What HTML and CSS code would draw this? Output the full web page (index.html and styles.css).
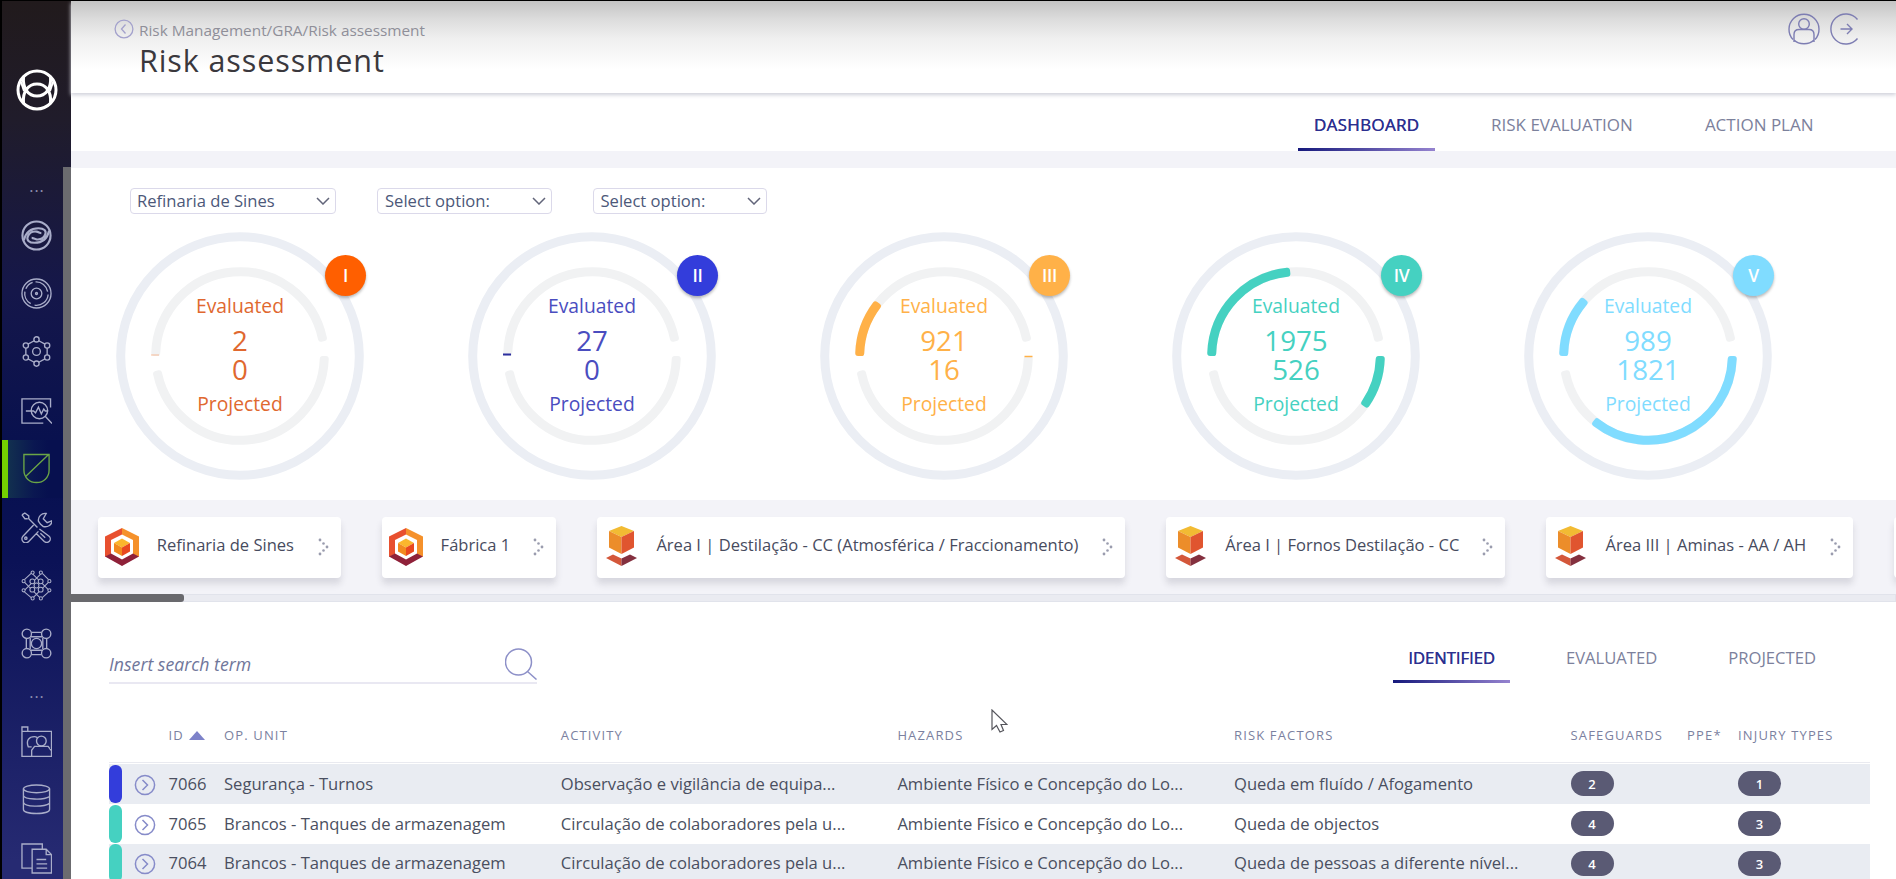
FILE: index.html
```html
<!DOCTYPE html>
<html lang="en">
<head>
<meta charset="utf-8">
<title>Risk assessment</title>
<link rel="stylesheet" href="styles.css">
</head>
<body>
<svg class="defs" width="0" height="0">
  <defs>
    <symbol id="plant" viewBox="0 0 34 38">
      <path d="M17 0L0 8.500V29l6-3V12l11-5.500z" fill="#e8502f"/>
      <path d="M17 0l17 8.500V29l-6-3V12L17 6.500z" fill="#f5912b"/>
      <path d="M0 28.500l6-3 11 6 11-6 6 3L17 38z" fill="#8f2139"/>
      <path d="M17 10.500l8 4.500-8 4.500L9 15z" fill="#fbb62d"/>
      <path d="M9 15l8 4.500V28l-8-4.500z" fill="#f28a1f"/>
      <path d="M25 15l-8 4.500V28l8-4.500z" fill="#e9481f"/>
    </symbol>
    <symbol id="area" viewBox="0 0 31 40">
      <path d="M15.500 0L28 5 15.500 11 3 5z" fill="#f2bb33"/>
      <path d="M3 5l12.500 6v17L3 21.500z" fill="#ec8d2a"/>
      <path d="M28 5l-12.500 6v17L28 21.500z" fill="#e0552f"/>
      <path d="M0 32l7-3.500 8.500 4V40z" fill="#d4573a"/>
      <path d="M31 32l-7-3.500-8.500 4V40z" fill="#84303f"/>
    </symbol>
    <symbol id="dots" viewBox="0 0 12 18">
      <g fill="#9a9cae"><circle cx="2" cy="2" r="1.400"/><circle cx="5.500" cy="5.500" r="1.300"/><circle cx="9" cy="9" r="1.400"/><circle cx="5.500" cy="12.500" r="1.300"/><circle cx="2" cy="16" r="1.400"/></g>
    </symbol>
    <symbol id="open" viewBox="0 0 22 22">
      <g fill="none" stroke="#868bc9" stroke-width="1.500"><circle cx="11" cy="11" r="9.600"/><path d="M8.500 6l5 5-5 5"/></g>
    </symbol>
  </defs>
</svg>
<div class="app">
  <aside class="sidebar">
    <svg class="logo" viewBox="0 0 42 42" fill="none" stroke="#fff" stroke-width="3">
      <circle cx="21" cy="21" r="19"/>
      <path d="M7.500 8c-1 12 5 19 13.500 19S35.500 20 34.500 8M7.500 34c-1-12 5-19 13.500-19s14.500 7 13.500 19"/>
      <path d="M5 13l3 9M37 13l-3 9" stroke-width="2"/>
    </svg>
    <nav class="menu">
      <span class="more">...</span>
      <a class="item bold"><svg viewBox="0 0 32 32"><circle cx="16" cy="16" r="14.500"/><path d="M3 21C5 12 11 8.500 18 8.500c6 0 8.500 3 7 6.500-1.500 3.500-5 5.500-9 5-2-.3-3.500-1.500-5-1.500M29 11C27 20 21 23.500 14 23.500c-6 0-8.500-3-7-6.500 1.500-3.500 5-5.500 9-5 2 .3 3.500 1.500 5 1.500"/></svg></a>
      <a class="item"><svg viewBox="0 0 32 32"><circle cx="16" cy="16" r="15"/><circle cx="16" cy="16" r="5.500"/><circle cx="16" cy="16" r="1"/><path d="M12 4.500A12 12 0 0 0 5 11M4 14a12 12 0 0 0 6 12.500M15 4a12 12 0 0 1 12.500 10M28 17a12 12 0 0 1-14 11"/></svg></a>
      <a class="item"><svg viewBox="0 0 32 32"><circle cx="16" cy="16" r="4"/><circle cx="16" cy="3.500" r="2.700"/><circle cx="16" cy="28.500" r="2.700"/><circle cx="5" cy="9.800" r="2.700"/><circle cx="27" cy="9.800" r="2.700"/><circle cx="5" cy="22.200" r="2.700"/><circle cx="27" cy="22.200" r="2.700"/><path d="M7.300 8.400l6.300-3.500M18.400 4.900l6.300 3.500M5 12.500v7M27 12.500v7M7.300 23.600l6.300 3.500M18.400 27.100l6.300-3.500"/></svg></a>
      <a class="item"><svg viewBox="0 0 32 32"><path d="M30.500 13V4H1v25h22"/><circle cx="19" cy="16" r="8.500"/><path d="M25 22l7 7.500M5 16.500h8l2 2 3-6 3 7 2.500-5 1.500 2h3"/></svg></a>
      <a class="item active"><svg viewBox="0 0 32 32"><path d="M3 1.500h26v16c0 8-6 13-13 13S3 25.500 3 17.500zM4.500 24.500L28.500 1.500"/></svg></a>
      <a class="item"><svg viewBox="0 0 32 32"><path d="M1 3l3-2 4 3v3l9 9M7 7L4 7 1 3M26 1.500a7 7 0 0 0-8 8l2 3 3 2.500c5 1 9-2 9-6l-5 2-4-4zM13 13.500L2 25a4 4 0 0 0 6 5.500L18 20M19 17.500l10 7.500a3.500 3.500 0 0 1-5 5.500l-8-8M20 22l5 4.500"/><circle cx="5" cy="27" r="1.200"/></svg></a>
      <a class="item mesh"><svg viewBox="0 0 32 32"><path d="M10.500 3.500L3.500 10M22 3.500l6.500 6.500M3.500 12.500l17 17M12 4l17 17M20.500 4L3.500 21M28.500 12.500l-17 17M3.500 22.500l7 6M28.500 22.500l-6.500 6"/><g fill="#0d1557"><circle cx="12" cy="2.700" r="1.600"/><circle cx="20.500" cy="2.700" r="1.600"/><circle cx="2.700" cy="11.500" r="1.600"/><circle cx="11.700" cy="11.700" r="2.500"/><circle cx="20.300" cy="11.700" r="2.500"/><circle cx="29.300" cy="11.500" r="1.600"/><circle cx="16" cy="16" r="2.500"/><circle cx="2.700" cy="21" r="1.600"/><circle cx="11.700" cy="20.300" r="2.500"/><circle cx="20.300" cy="20.300" r="2.500"/><circle cx="29.300" cy="21" r="1.600"/><circle cx="12" cy="29.300" r="1.600"/><circle cx="20.500" cy="29.300" r="1.600"/></g></svg></a>
      <a class="item"><svg viewBox="0 0 32 32"><circle cx="6" cy="6" r="4.800"/><circle cx="26" cy="6" r="4.800"/><circle cx="6" cy="26" r="4.800"/><circle cx="26" cy="26" r="4.800"/><circle cx="16" cy="16" r="5.300"/><path d="M11 4.500h10M10 9h12M10 23h12M11 27.500h10M5.500 11v10M9.500 10v12M22.500 10v12M26.500 11v10"/></svg></a>
      <span class="more low">...</span>
      <a class="item"><svg viewBox="0 0 32 32"><path d="M1 6V1h6v5M1 5.500h30.500v26H1zM11 31v-6l3-4h14l3 4M11 21.500H7.500C5 15 8 11 14 11c1.500 0 2 .5 3 1"/><circle cx="21" cy="15.500" r="5"/></svg></a>
      <a class="item"><svg viewBox="0 0 32 32"><ellipse cx="16" cy="5" rx="13.500" ry="4"/><path d="M2.500 5v21c0 6 27 6 27 0V5M2.500 12c1 4 20 5 27 1M2.500 19c1 5 21 5 27 1"/></svg></a>
      <a class="item"><svg viewBox="0 0 32 32"><path d="M11 26H1V1h21v5M11.500 6.500H26l5.500 5.500v19h-20zM26 6.500V12h5.500M16 17h10M16 21.500h11M16 26h11"/></svg></a>
    </nav>
    <span class="side-scroll"></span>
  </aside>
  <main class="main">
    <header class="header">
      <div class="heading">
        <div class="crumbs"><svg viewBox="0 0 20 20" fill="none" stroke="#a3a1cc" stroke-width="1.300"><circle cx="10" cy="10" r="8.900"/><path d="M11.500 5.500L7.500 10l4 4.500"/></svg><span>Risk Management/GRA/Risk assessment</span></div>
        <h1>Risk assessment</h1>
      </div>
      <div class="account">
        <svg viewBox="0 0 32 32"><path d="M5 26.500a15 15 0 1 1 22 0"/><circle cx="16" cy="11" r="5.300"/><path d="M6 29V21.500c0-3.500 2-5 5-5h10c3 0 5 1.500 5 5V29M6 27c5 5 15 5 20 0"/></svg>
        <svg viewBox="0 0 32 32"><path d="M27.500 6.500a15 15 0 1 0 0 19M10.500 16h11M17 11l5 5-5 5"/></svg>
      </div>
    </header>
    <nav class="tabs">
      <a class="on">DASHBOARD</a><a class="t2">RISK EVALUATION</a><a class="t3">ACTION PLAN</a>
    </nav>
    <section class="dashboard">
      <div class="filters">
        <div class="select wide"><span>Refinaria de Sines</span><svg viewBox="0 0 14 8"><path d="M1 1l6 6 6-6"/></svg></div>
        <div class="select"><span>Select option:</span><svg viewBox="0 0 14 8"><path d="M1 1l6 6 6-6"/></svg></div>
        <div class="select"><span>Select option:</span><svg viewBox="0 0 14 8"><path d="M1 1l6 6 6-6"/></svg></div>
      </div>
      <div class="gauges">
        <div class="gauge c1" data-top="0" data-bottom="0"><svg viewBox="-124 -124 248 248"><path class="tick pale" d="M-89-1h8"/></svg><div class="figures"><span>Evaluated</span><b>2</b><b>0</b><span>Projected</span></div><i class="level">I</i></div>
        <div class="gauge c2" data-top="0" data-bottom="0"><svg viewBox="-124 -124 248 248"><path class="tick" d="M-89-1.500h8"/></svg><div class="figures"><span>Evaluated</span><b>27</b><b>0</b><span>Projected</span></div><i class="level">II</i></div>
        <div class="gauge c3" data-top="39" data-bottom="0"><svg viewBox="-124 -124 248 248"><path class="tick thin" d="M80.500 .5h8"/></svg><div class="figures"><span>Evaluated</span><b>921</b><b>16</b><span>Projected</span></div><i class="level">III</i></div>
        <div class="gauge c4" data-top="86" data-bottom="36.500"><svg viewBox="-124 -124 248 248"></svg><div class="figures"><span>Evaluated</span><b>1975</b><b>526</b><span>Projected</span></div><i class="level">IV</i></div>
        <div class="gauge c5" data-top="42" data-bottom="130"><svg viewBox="-124 -124 248 248"></svg><div class="figures"><span>Evaluated</span><b>989</b><b>1821</b><span>Projected</span></div><i class="level">V</i></div>
      </div>
    </section>
    <section class="units">
      <div class="cards">
        <div class="card k1"><svg class="plant"><use href="#plant"/></svg><span>Refinaria de Sines</span><svg class="go"><use href="#dots"/></svg></div>
        <div class="card k2"><svg class="plant"><use href="#plant"/></svg><span>Fábrica 1</span><svg class="go"><use href="#dots"/></svg></div>
        <div class="card k3"><svg class="area"><use href="#area"/></svg><span>Área I | Destilação - CC (Atmosférica / Fraccionamento)</span><svg class="go"><use href="#dots"/></svg></div>
        <div class="card k4"><svg class="area"><use href="#area"/></svg><span>Área I | Fornos Destilação - CC</span><svg class="go"><use href="#dots"/></svg></div>
        <div class="card k5"><svg class="area"><use href="#area"/></svg><span>Área III | Aminas - AA / AH</span><svg class="go"><use href="#dots"/></svg></div>
        <div class="card k6"></div>
      </div>
      <div class="track"><span class="thumb"></span></div>
    </section>
    <section class="risks">
      <div class="tools">
        <div class="search"><em>Insert search term</em><svg viewBox="0 0 32 32"><circle cx="13.500" cy="14" r="13"/><path d="M22.500 23.500l9 8"/></svg></div>
        <nav class="views"><a class="on">IDENTIFIED</a><a class="v2">EVALUATED</a><a class="v3">PROJECTED</a></nav>
      </div>
      <div class="row head"><span></span><span>ID <svg viewBox="0 0 16 9"><path d="M8 0l8 9H0z"/></svg></span><span>OP. UNIT</span><span>ACTIVITY</span><span>HAZARDS</span><span>RISK FACTORS</span><span>SAFEGUARDS</span><span>PPE*</span><span>INJURY TYPES</span></div>
      <div class="row odd"><span class="lead"><i class="bar blue"></i><svg class="open"><use href="#open"/></svg></span><span>7066</span><span>Segurança - Turnos</span><span>Observação e vigilância de equipa...</span><span>Ambiente Físico e Concepção do Lo...</span><span>Queda em fluído / Afogamento</span><span class="pill">2</span><span></span><span class="pill">1</span></div>
      <div class="row"><span class="lead"><i class="bar"></i><svg class="open"><use href="#open"/></svg></span><span>7065</span><span>Brancos - Tanques de armazenagem</span><span>Circulação de colaboradores pela u...</span><span>Ambiente Físico e Concepção do Lo...</span><span>Queda de objectos</span><span class="pill">4</span><span></span><span class="pill">3</span></div>
      <div class="row odd"><span class="lead"><i class="bar"></i><svg class="open"><use href="#open"/></svg></span><span>7064</span><span>Brancos - Tanques de armazenagem</span><span>Circulação de colaboradores pela u...</span><span>Ambiente Físico e Concepção do Lo...</span><span>Queda de pessoas a diferente nível...</span><span class="pill">4</span><span></span><span class="pill">3</span></div>
    </section>
  </main>
</div>
<svg class="cursor" viewBox="0 0 17 24"><path d="M1 1v19.500l4.500-4 3.500 6.500 3.500-1.500-2.500-6h6z"/></svg>
<script src="gauges.js"></script>
</body>
</html>
```
FILE: styles.css
```css
* { box-sizing: border-box; }
body { margin: 0; width: 1896px; height: 879px; overflow: hidden; background: #fff; color: #474b5e; font-family: "Open Sans", "Noto Sans", sans-serif; font-size: 16.600px; }
.defs { position: absolute; }
.app { display: flex; height: 879px; border-top: 1px solid #000; overflow: hidden; }

.sidebar { position: relative; flex: none; width: 71px; border-left: 2px solid #000; background: linear-gradient(#211a1c 0, #201c2b 120px, #15174a 290px, #07104f 460px, #0b1256 560px, #262a72 860px); }
.logo { display: block; width: 42px; height: 42px; margin: 68px 0 0 14px; }
.menu { display: flex; flex-direction: column; margin-top: 66px; width: 61px; }
.more { height: 29px; line-height: 19px; text-align: center; margin-left: 9px; color: #8f91b0; font-size: 16px; letter-spacing: 1px; }
.more.low { height: 39px; line-height: 38px; }
.item { display: flex; align-items: center; height: 58.400px; padding-left: 19.300px; }
.item svg { width: 31px; height: 31px; fill: none; stroke: #a9adc9; stroke-width: 1.400; }
.item.bold svg { stroke-width: 2.200; }
.item.mesh svg { stroke-width: 1.100; }
.item.active { border-left: 6px solid #74d000; padding-left: 13.300px; background: linear-gradient(90deg, #12304f 0, #0a1751 26px, #07104f 40px); }
.item.active svg { stroke: #6ba646; }
.side-scroll { position: absolute; left: 61px; top: 166px; width: 8px; height: 720px; background: #6b6b6f; }

.main { flex: 1; min-width: 0; display: flex; flex-direction: column; }
.header { position: relative; flex: none; height: 92px; display: flex; justify-content: space-between; background: linear-gradient(#c4c4c4 0, #dcdcdc 18px, #f0f0f0 38px, #fff 68px); box-shadow: 0 2px 4px #cfd0da; }
.heading { padding: 18px 0 0 43px; }
.crumbs { display: flex; height: 22px; align-items: center; gap: 5px; font-size: 15.350px; color: #8f8f99; white-space: nowrap; }
.crumbs svg { width: 20px; height: 20px; margin-top: -3px; }
h1 { margin: -2px 0 0 25px; font-weight: 400; font-size: 30.500px; letter-spacing: .9px; line-height: 42px; color: #3a383d; white-space: nowrap; }
.account { display: flex; gap: 10px; padding: 12px 34px 0 0; }
.account svg { width: 32px; height: 32px; fill: none; stroke: #7d7db2; stroke-width: 1.400; }

.tabs { flex: none; display: flex; height: 58px; font-size: 17px; color: #7c819c; white-space: nowrap; }
.tabs a { padding-top: 20px; line-height: 24px; }
.tabs .t2 { margin-left: 56px; }
.tabs .t3 { margin-left: 72px; }
.on { color: #2c2f8f; text-align: center; background: linear-gradient(90deg, #16197c, #9583cf) 0 100% / 100% 3px no-repeat; text-shadow: .4px 0 #2c2f8f; }
.tabs .on { width: 137px; margin-left: 1227px; letter-spacing: .3px; }

.dashboard { flex: none; height: 349px; border-top: 17px solid #f3f3f8; }
.filters { display: flex; gap: 41px; padding: 20px 0 0 59px; }
.select { display: flex; align-items: center; justify-content: space-between; width: 174.500px; height: 26px; border: 1px solid #dbd9ea; border-radius: 4px; padding: 0 5px 0 7px; font-size: 16.600px; color: #4c5879; }
.select span { margin-top: -1px; }
.select.wide { width: 206px; padding-left: 6px; }
.select svg { width: 14px; height: 8px; fill: none; stroke: #62657a; stroke-width: 1.500; }
.gauges { display: flex; gap: 104px; padding: 18px 0 0 45px; }
.gauge { position: relative; width: 248px; height: 248px; color: var(--c); }
.gauge > svg { display: block; width: 248px; height: 248px; fill: none; }
.ring { stroke: #ebeef4; stroke-width: 9; }
.groove, .value { stroke-width: 6; stroke-linejoin: round; }
.groove { stroke: #f1f2f3; fill: #f1f2f3; }
.value { stroke: var(--c); fill: var(--c); }
.tick { stroke: var(--c); stroke-width: 2; }
.tick.thin { stroke-width: 1.500; }
.tick.pale { opacity: .25; stroke-width: 1.500; }
.figures { position: absolute; inset: 0; display: flex; flex-direction: column; align-items: center; padding-top: 60px; font-size: 19.300px; line-height: 28px; }
.figures b { font-weight: 400; font-size: 27.700px; line-height: 28.600px; }
.figures span:first-child { margin-bottom: 6px; }
.figures span:last-child { margin-top: 7px; }
.level { position: absolute; left: 209px; top: 23px; width: 41px; height: 41px; border-radius: 50%; background: var(--c); color: #fff; font: 600 17.500px/41px "Open Sans", sans-serif; letter-spacing: -.4px; text-align: center; box-shadow: 0 2px 3px #0004; }
.c1 { --c: #ff5f00; }
.c1 .figures { color: #e0682f; }
.c2 { --c: #333ddb; }
.c2 .figures { color: #4a4dbf; }
.c2 .tick { stroke: #2c2f9f; }
.c3 { --c: #ffb148; }
.c4 { --c: #45d1c1; }
.c5 { --c: #80dcff; }

.units { flex: none; height: 102px; background: #f3f3f8; overflow: hidden; }
.cards { display: flex; gap: 40.800px; padding: 17px 0 0 26.800px; height: 94px; }
.card { flex: none; display: flex; align-items: center; height: 60.500px; border-radius: 4px; background: #fff; box-shadow: 0 6px 6px #b9bac47a; padding: 0 11px 0 9px; font-size: 16.550px; white-space: nowrap; }
.card svg { flex: none; }
.card span { flex: 1; margin-top: -6px; }
.k1 { width: 243px; }
.k2 { width: 174.500px; }
.k3 { width: 528px; }
.k4 { width: 339.500px; }
.k5 { width: 307px; }
.k6 { width: 200px; }
.plant { width: 34px; height: 38px; margin-right: 17.500px; }
.k1 .plant, .k2 .plant { margin-left: -1.500px; }
.area { width: 31px; height: 40px; margin-right: 19.500px; margin-top: -3px; }
.go { width: 12px; height: 18px; }
.track { height: 8px; background: #eaebf1; border: 1px solid #e1e3eb; border-left: 0; }
.thumb { display: block; width: 113px; height: 8px; margin-top: -1px; border-radius: 0 3px 3px 0; background: #69696d; }

.risks { flex: 1; padding-left: 38px; }
.tools { display: flex; height: 105px; }
.search { display: flex; justify-content: space-between; width: 428px; height: 82px; padding-top: 46px; border-bottom: 2px solid #e9e8f2; font-size: 17.700px; line-height: 32px; color: #70769a; }
.search svg { width: 32px; height: 32px; fill: none; stroke: #8d90c8; stroke-width: 1.500; }
.views { display: flex; height: 81px; margin-left: 856px; font-size: 16.600px; color: #7c819c; white-space: nowrap; }
.views a { padding-top: 43px; line-height: 26px; }
.views .on { width: 117px; }
.views .v2 { margin-left: 56px; }
.views .v3 { margin-left: 71px; }
.row { display: grid; grid-template-columns: 59.600px 55.400px 336.800px 336.600px 336.600px 336.600px 116.500px 51px 132.400px; width: 1761px; height: 39.800px; align-items: center; white-space: nowrap; color: #4a4f60; }
.row > span { line-height: 23px; padding-bottom: 1px; }
.row.odd { background: #e9ecf2; }
.row.head { height: 56px; padding-top: 2px; border-bottom: 1px solid #e9eaf0; margin-bottom: 1px; font-size: 13px; letter-spacing: 1.150px; color: #7b81a0; }
.head svg { width: 16px; height: 9px; margin-left: 1px; fill: #7d82c9; }
.row .lead { display: flex; align-items: center; gap: 12px; padding: 0; }
.bar { width: 13px; height: 38px; border-radius: 6px; background: #45d1c1; }
.bar.blue { background: #333ddb; }
.open { width: 22px; height: 22px; margin-top: 2px; }
.row > .pill { width: 43px; height: 25px; padding: 0; border-radius: 13px; background: #5a5a74; color: #fff; font-size: 13px; font-weight: 600; line-height: 26px; text-align: center; }
.cursor { position: absolute; left: 991px; top: 709px; width: 17px; height: 24px; fill: #fff; stroke: #55555c; stroke-width: 1.200; }
```
FILE: gauges.js
```js
// Each gauge has two grooves: the upper runs left to right, the lower right to left.
const NS = "http://www.w3.org/2000/svg";
const INNER = 82.8, OUTER = 85.8, CAP = 2;

function point(radius, degrees) {
  const a = degrees * Math.PI / 180;
  return (radius * Math.cos(a)).toFixed(2) + " " + (radius * Math.sin(a)).toFixed(2);
}

function arc(svg, cls, start, sweep) {
  const from = start + CAP, to = start + sweep - CAP;
  const path = document.createElementNS(NS, "path");
  path.setAttribute("class", cls);
  path.setAttribute("d", `M${point(OUTER, from)}A${OUTER} ${OUTER} 0 0 1 ${point(OUTER, to)}L${point(INNER, to)}A${INNER} ${INNER} 0 0 0 ${point(INNER, from)}Z`);
  svg.insertBefore(path, svg.querySelector(".tick"));
}

document.querySelectorAll(".gauge").forEach(gauge => {
  const svg = gauge.querySelector("svg");
  const ring = document.createElementNS(NS, "circle");
  ring.setAttribute("class", "ring");
  ring.setAttribute("r", 119.300);
  svg.prepend(ring);
  arc(svg, "groove", 180, 170);
  arc(svg, "groove", 0, 170);
  if (+gauge.dataset.top) arc(svg, "value", 180, +gauge.dataset.top);
  if (+gauge.dataset.bottom) arc(svg, "value", 0, +gauge.dataset.bottom);
});
```
